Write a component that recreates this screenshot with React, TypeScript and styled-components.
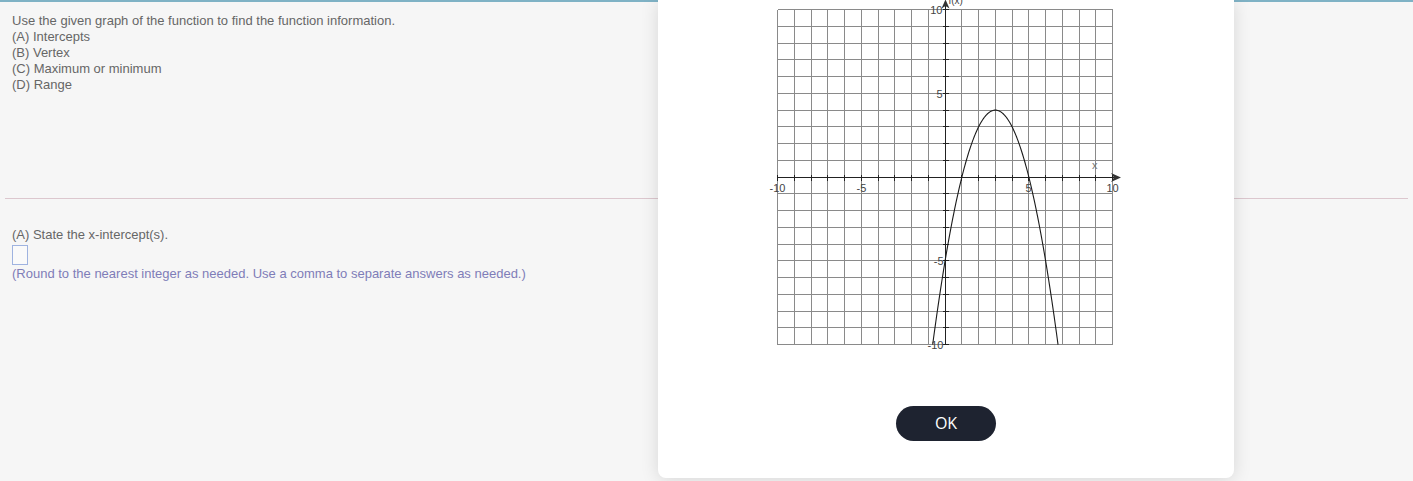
import React from "react";
import styled, { createGlobalStyle } from "styled-components";

const GlobalStyle = createGlobalStyle`
  html, body { margin: 0; padding: 0; }
  body {
    background: #f6f6f6;
    font-family: "Liberation Sans", Arial, sans-serif;
  }
`;

const Page = styled.div`
  position: relative;
  min-height: 481px;
  background: #f6f6f6;
  overflow: hidden;
`;

const TopBar = styled.div`
  height: 2px;
  background: #7fb2c5;
`;

const Question = styled.section`
  box-sizing: border-box;
  height: 196px;
  padding: 11px 12px 0;
`;

const Line = styled.div<{ $tone?: "plain" | "hint" }>`
  font-size: 13px;
  line-height: 16px;
  color: ${(p) => (p.$tone === "hint" ? "#7f7db8" : "#666")};
`;

const Divider = styled.hr`
  margin: 0 5px;
  border: 0;
  border-top: 1px solid #dcc7ce;
`;

const Answer = styled.section`
  padding: 28px 12px 0;
`;

const AnswerBox = styled.span`
  display: block;
  box-sizing: border-box;
  width: 16px;
  height: 20px;
  margin: 2px 0 1px;
  border: 1px solid #9fb3e0;
  background: #fafafa;
`;

const Card = styled.div`
  position: absolute;
  top: 0;
  left: 658px;
  width: 576px;
  height: 478px;
  box-sizing: border-box;
  background: #fff;
  border-radius: 0 0 8px 8px;
  box-shadow: 0 2px 18px rgba(0, 0, 0, 0.13);
  display: flex;
  flex-direction: column;
  align-items: center;
`;

const GraphSvg = styled.svg`
  display: block;
  flex: none;
`;

const OkButton = styled.button`
  margin-top: 50px;
  width: 100px;
  height: 35px;
  border: 0;
  border-radius: 18px;
  background: #1e2330;
  color: #fff;
  font-family: "Open Sans", "Noto Sans", sans-serif;
  font-size: 16px;
  line-height: 35px;
  padding: 0;
  cursor: pointer;
`;

const U = 16.75;
const X0 = 12.6;
const Y0 = 9.6;
const W = 362;
const H = 356;

const gx = (i: number) => Math.floor(X0 + i * U) + 0.5;
const gy = (i: number) => Math.floor(Y0 + i * U) + 0.5;
const sx = (v: number) => X0 + (v + 10) * U;
const sy = (v: number) => Y0 + (10 - v) * U;

const f = (x: number) => -(x - 3) * (x - 3) + 4;

function Graph() {
  const idx = Array.from({ length: 21 }, (_, i) => i);
  const left = gx(0);
  const right = gx(20);
  const top = gy(0);
  const bottom = gy(20);
  const ax = gx(10);
  const ay = gy(10);

  const pts: string[] = [];
  const x1 = 3 - Math.sqrt(14);
  const x2 = 3 + Math.sqrt(14);
  const steps = 160;
  for (let k = 0; k <= steps; k++) {
    const x = x1 + ((x2 - x1) * k) / steps;
    pts.push(`${sx(x).toFixed(2)},${sy(f(x)).toFixed(2)}`);
  }

  const tipX = 356;
  const tipY = 0.5;

  return (
    <GraphSvg width={W} height={H} viewBox={`0 0 ${W} ${H}`}>
      <g stroke="#8a8a8a" strokeWidth={1} shapeRendering="crispEdges">
        {idx.map((i) => (
          <line key={`v${i}`} x1={gx(i)} y1={top} x2={gx(i)} y2={bottom} />
        ))}
        {idx.map((i) => (
          <line key={`h${i}`} x1={left} y1={gy(i)} x2={right} y2={gy(i)} />
        ))}
      </g>
      <g stroke="#222" strokeWidth={1} shapeRendering="crispEdges">
        <line x1={left} y1={ay} x2={tipX - 4} y2={ay} />
        <line x1={ax} y1={bottom} x2={ax} y2={tipY + 4} />
        {idx.map((i) => (
          <line key={`tx${i}`} x1={gx(i)} y1={ay - 3} x2={gx(i)} y2={ay + 3} />
        ))}
        {idx.map((i) => (
          <line key={`ty${i}`} x1={ax - 3} y1={gy(i)} x2={ax + 3} y2={gy(i)} />
        ))}
      </g>
      <path
        d={`M${tipX},${ay} L${tipX - 10},${ay - 4.5} L${tipX - 7},${ay} L${tipX - 10},${ay + 4.5} Z`}
        fill="#333"
      />
      <path
        d={`M${ax},${tipY - 1} L${ax - 4},${tipY + 8} L${ax},${tipY + 5.5} L${ax + 4},${tipY + 8} Z`}
        fill="#333"
      />
      <polyline points={pts.join(" ")} fill="none" stroke="#1a1a1a" strokeWidth={1.1} />
      <g fontFamily='"Liberation Sans", Arial, sans-serif' fontSize={11} fill="#444">
        <text x={gx(0)} y={ay + 14} textAnchor="middle">-10</text>
        <text x={gx(5)} y={ay + 14} textAnchor="middle">-5</text>
        <text x={gx(15)} y={ay + 14} textAnchor="middle">5</text>
        <text x={gx(20)} y={ay + 14} textAnchor="middle">10</text>
        <text x={ax - 3} y={gy(0) + 4} textAnchor="end">10</text>
        <text x={ax - 3} y={gy(5) + 4} textAnchor="end">5</text>
        <text x={ax - 2} y={gy(15) + 4} textAnchor="end">-5</text>
        <text x={ax - 2} y={gy(20) + 4} textAnchor="end">-10</text>
      </g>
      <text x={327} y={169} fontFamily='"Liberation Sans", Arial, sans-serif' fontSize={11} fill="#777">x</text>
      <text x={ax + 3} y={4} fontFamily='"Liberation Sans", Arial, sans-serif' fontSize={10} fill="#444">f(x)</text>
    </GraphSvg>
  );
}

export default function App() {
  return (
    <Page>
      <GlobalStyle />
      <TopBar />
      <Question>
        <Line>Use the given graph of the function to find the function information.</Line>
        <Line>(A) Intercepts</Line>
        <Line>(B) Vertex</Line>
        <Line>(C) Maximum or minimum</Line>
        <Line>(D) Range</Line>
      </Question>
      <Divider />
      <Answer>
        <Line>(A) State the x-intercept(s).</Line>
        <AnswerBox />
        <Line $tone="hint">
          (Round to the nearest integer as needed. Use a comma to separate answers as needed.)
        </Line>
      </Answer>
      <Card>
        <Graph />
        <OkButton type="button">OK</OkButton>
      </Card>
    </Page>
  );
}
